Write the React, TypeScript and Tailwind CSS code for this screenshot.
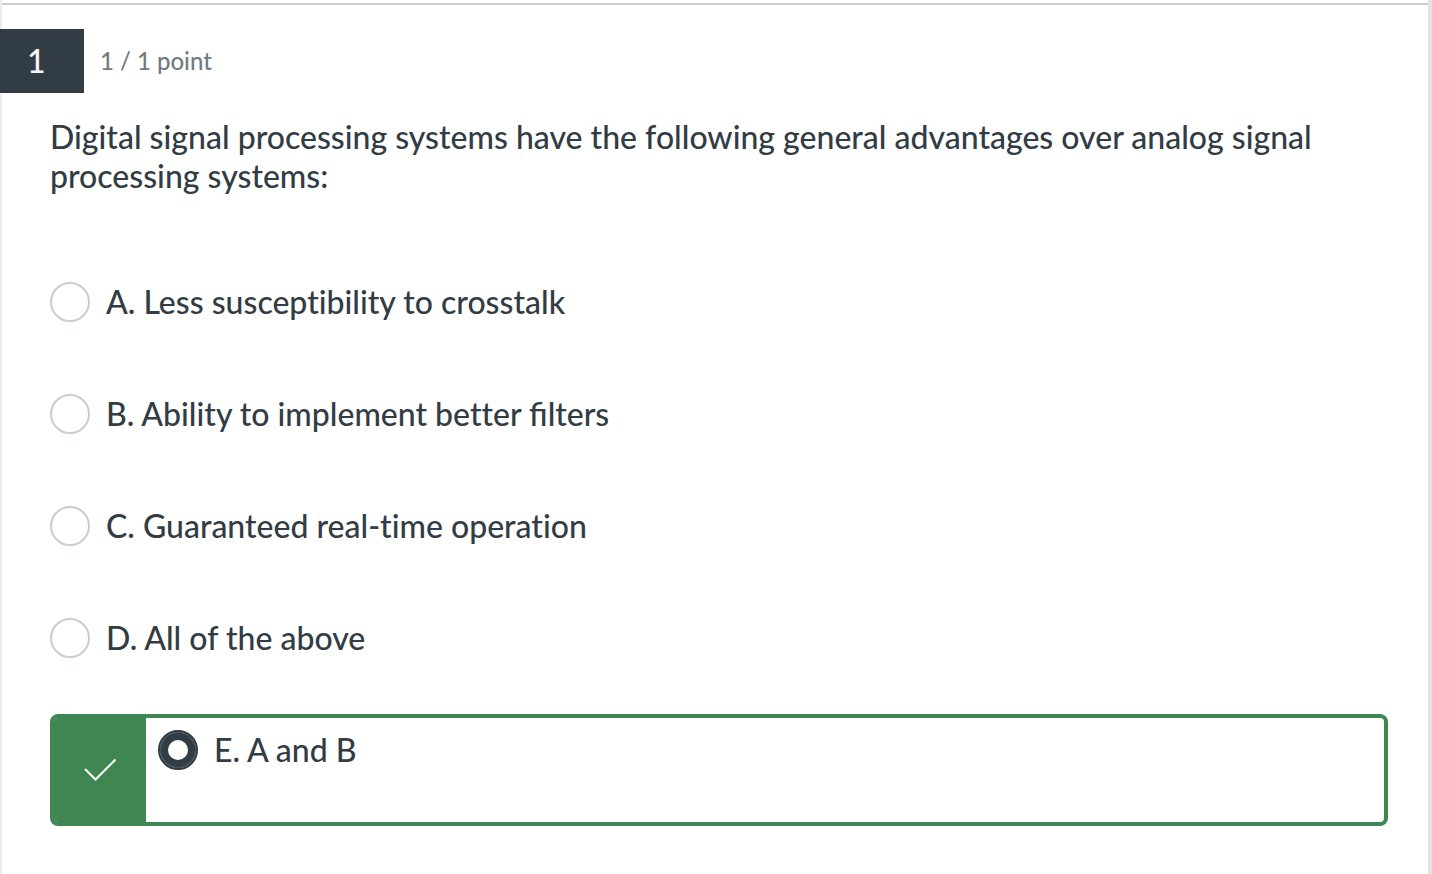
import React from "react";

type Option = { id: string; label: string };

const options: Option[] = [
  { id: "a", label: "A. Less susceptibility to crosstalk" },
  { id: "b", label: "B. Ability to implement better filters" },
  { id: "c", label: "C. Guaranteed real-time operation" },
  { id: "d", label: "D. All of the above" },
];

function Radio({ id, checked }: { id: string; checked?: boolean }) {
  return (
    <input
      type="radio"
      id={id}
      name="answer"
      defaultChecked={checked}
      className="size-10 shrink-0 appearance-none rounded-full border-2 border-[#c7cdd1] bg-white checked:border-[#323c44] checked:shadow-[inset_0_0_0_1px_#4f5960,inset_0_0_0_8px_#323c44]"
    />
  );
}

// Only the "fi" pair is joined; the font's "ti" and "tt" ligatures stay off.
function OptionLabel({ id, text }: { id: string; text: string }) {
  return (
    <label htmlFor={id} className="text-[32px] leading-10 font-medium">
      {text.split(/(fi)/).map((part, i) =>
        part === "fi" ? (
          <span key={i} className="[font-variant-ligatures:normal]">{part}</span>
        ) : (
          part
        ),
      )}
    </label>
  );
}

export default function App() {
  return (
    <main className="min-h-screen border-r-4 border-l-2 border-r-[#e3e3e3] border-l-[#ebebeb] bg-white pt-[3px] font-['Lato',sans-serif] text-[#323c44] [font-variant-ligatures:none]">
      <section className="border-t-2 border-[#c7cdd1] pt-6">
        <header className="-ml-0.5 flex items-center gap-4">
          <div className="flex h-16 w-21 items-center bg-[#323c44] pl-[27px] text-[32px] font-medium text-[#f5f5f5]">1</div>
          <p className="text-2xl font-medium text-[#6f7a82]">1 / 1 point</p>
        </header>
        <div className="pt-6 pr-10 pl-12">
          <h1 id="question" className="text-[32px] leading-[39px] font-medium">
            Digital signal processing systems have the following general advantages over analog signal processing systems:
          </h1>
          <fieldset aria-labelledby="question" className="pt-[71px]">
            {options.map((o) => (
              <div key={o.id} className="flex h-28 items-start gap-4 pt-4">
                <Radio id={o.id} />
                <OptionLabel id={o.id} text={o.label} />
              </div>
            ))}
            <div className="flex h-28 overflow-hidden rounded-lg border-4 border-[#3f8653]">
              <div className="flex w-23 items-center justify-center bg-[#3f8653]">
                <svg viewBox="0 0 32 24" className="h-6 w-8" fill="none" stroke="white" strokeWidth="2" aria-hidden="true">
                  <path d="M1 11 11.5 21.5 31.5 1.5" />
                </svg>
              </div>
              <div className="flex items-start gap-4 pt-3 pl-3">
                <Radio id="e" checked />
                <OptionLabel id="e" text="E. A and B" />
              </div>
            </div>
          </fieldset>
        </div>
      </section>
    </main>
  );
}
